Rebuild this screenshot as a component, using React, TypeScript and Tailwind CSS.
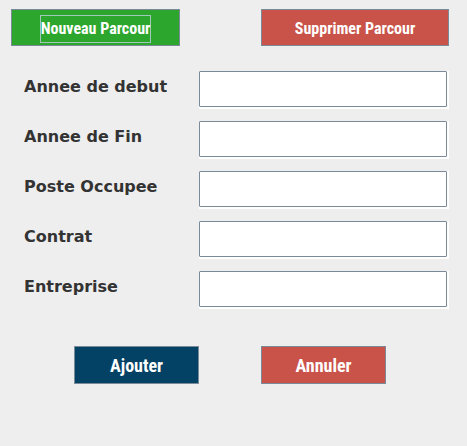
import type { ReactNode } from "react";

const fields = [
  { id: "debut", label: "Annee de debut" },
  { id: "fin", label: "Annee de Fin" },
  { id: "poste", label: "Poste Occupee" },
  { id: "contrat", label: "Contrat" },
  { id: "entreprise", label: "Entreprise" },
];

function ActionButton({ className, children }: { className: string; children: ReactNode }) {
  return (
    <button
      type="button"
      className={`flex items-center justify-center border border-[#7a8a99] pt-0.5 font-['Liberation_Sans_Narrow','Roboto_Condensed','Liberation_Sans',sans-serif] font-bold whitespace-nowrap text-white ${className}`}
    >
      {children}
    </button>
  );
}

function Field({ id, label }: { id: string; label: string }) {
  return (
    <div className="flex items-start">
      <label
        htmlFor={id}
        className="w-[175px] shrink-0 pt-1 font-['DejaVu_Sans',sans-serif] text-[16px] leading-6 font-bold whitespace-nowrap text-[#333333]"
      >
        {label}
      </label>
      <div className="min-w-0 flex-1 bg-white pr-0.5 pb-0.5">
        <input
          id={id}
          type="text"
          className="block h-9 w-full rounded-[1px] border border-[#7a8a99] bg-white px-1 outline-none"
        />
      </div>
    </div>
  );
}

export default function App() {
  return (
    <main className="min-h-screen bg-[#eeeeee] pt-[9px] pr-[18px] pb-6">
      <div className="flex justify-between pl-[11px]">
        <ActionButton className="h-[37px] w-[169px] bg-[#2ca62c] text-[16px] leading-[26px]">
          <span className="border border-[#a3c7bb]">Nouveau Parcour</span>
        </ActionButton>
        <ActionButton className="h-[37px] w-[188px] bg-[#c95249] text-[16px] leading-[26px]">
          Supprimer Parcour
        </ActionButton>
      </div>
      <form className="mt-[25px] flex flex-col gap-3 pl-6">
        {fields.map((field) => (
          <Field key={field.id} id={field.id} label={field.label} />
        ))}
      </form>
      <div className="mt-[37px] flex gap-[62px] pl-[74px]">
        <ActionButton className="h-[38px] w-[125px] bg-[#034265] text-[18px] leading-[26px]">Ajouter</ActionButton>
        <ActionButton className="h-[38px] w-[125px] bg-[#c95249] text-[18px] leading-[26px]">Annuler</ActionButton>
      </div>
    </main>
  );
}
